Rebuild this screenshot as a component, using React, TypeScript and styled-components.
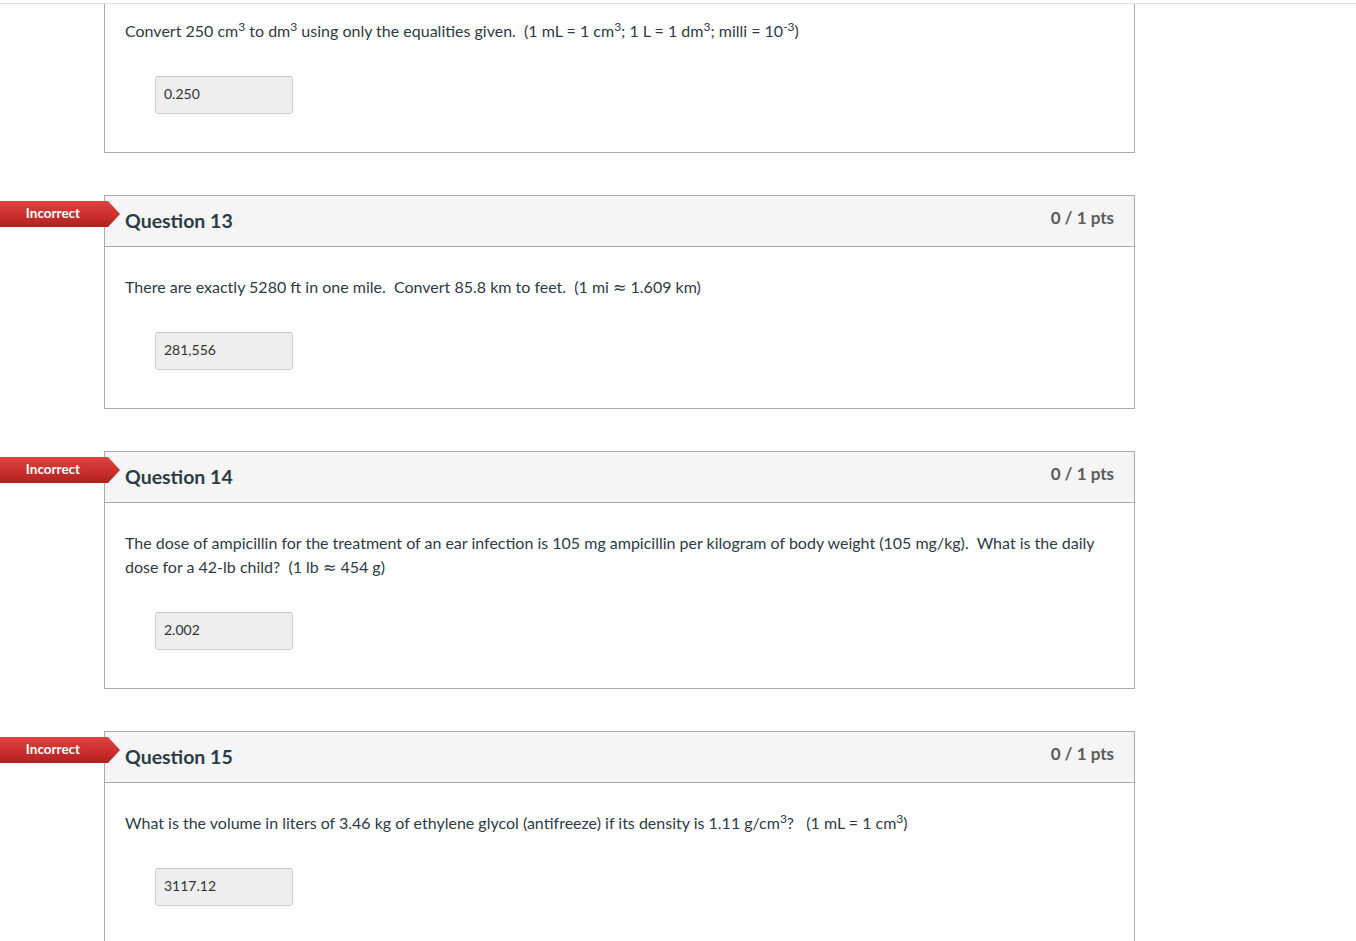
import React from 'react';
import styled, { createGlobalStyle } from 'styled-components';

const GlobalStyle = createGlobalStyle`
  body {
    margin: 0;
    background: #ffffff;
    font-family: Lato, "Open Sans", Arial, sans-serif;
    color: #2d3b45;
  }
`;

const Page = styled.div`
  width: 1356px;
`;

const TopStrip = styled.div`
  height: 3px;
  border-bottom: 1px solid #e3e3e3;
`;

const Card = styled.div<{ $cut?: boolean }>`
  position: relative;
  width: 1029px;
  margin: ${p => (p.$cut ? '0' : '42px')} 0 0 104px;
  border: 1px solid #aaaaaa;
  border-top: ${p => (p.$cut ? 'none' : '1px solid #aaaaaa')};
  background: #ffffff;
`;

const Header = styled.div`
  display: flex;
  justify-content: space-between;
  align-items: flex-start;
  padding: 10px 20px;
  background: #f5f5f5;
  border-bottom: 1px solid #aaaaaa;
`;

const QuestionName = styled.div`
  font-size: 19.5px;
  line-height: 30px;
  font-weight: 700;
  color: #2d3b45;
`;

const Points = styled.div`
  font-size: 17px;
  line-height: 24px;
  font-weight: 700;
  color: #5b5b5b;
`;

const Badge = styled.div`
  position: absolute;
  top: 5px;
  left: -105px;
  width: 120px;
  height: 26px;
  background: linear-gradient(#e2423f, #b3201f);
  clip-path: polygon(0 0, 108px 0, 120px 50%, 108px 100%, 0 100%);
  color: #ffffff;
  font-size: 13.5px;
  font-weight: 700;
  line-height: 25px;
`;

const BadgeLabel = styled.span`
  display: block;
  width: 106px;
  text-align: center;
`;

const Body = styled.div<{ $cut?: boolean }>`
  padding: ${p => (p.$cut ? '15px' : '28px')} 20px 0;
`;

const QuestionText = styled.div`
  font-size: 16px;
  line-height: 24px;
  color: #2d3b45;

  sup {
    font-size: 12px;
    line-height: 0;
    vertical-align: 6px;
  }
`;

const Approx = styled.span`
  font-family: "DejaVu Sans", sans-serif;
  font-size: 16px;
  line-height: 0;
`;

const AnswerRow = styled.div`
  margin: 33px 0 38px 30px;
`;

const AnswerBox = styled.input`
  box-sizing: border-box;
  width: 138px;
  height: 38px;
  padding: 0 8px 3px;
  background: #eeeeee;
  border: 1px solid #cccccc;
  border-radius: 3px;
  font-family: Lato, "Open Sans", Arial, sans-serif;
  font-size: 14px;
  color: #333333;
  outline: none;
`;

interface Question {
  number?: number;
  text: React.ReactNode;
  answer: string;
  cut?: boolean;
}

const questions: Question[] = [
  {
    cut: true,
    text: (
      <>
        Convert 250 cm<sup>3</sup> to dm<sup>3</sup> using only the equalities given.&nbsp; (1 mL = 1 cm
        <sup>3</sup>; 1 L = 1 dm<sup>3</sup>; milli = 10<sup>-3</sup>)
      </>
    ),
    answer: '0.250',
  },
  {
    number: 13,
    text: (
      <>
        There are exactly 5280 ft in one mile.&nbsp; Convert 85.8 km to feet.&nbsp; (1 mi <Approx>≈</Approx> 1.609
        km)
      </>
    ),
    answer: '281,556',
  },
  {
    number: 14,
    text: (
      <>
        The dose of ampicillin for the treatment of an ear infection is 105 mg ampicillin per kilogram of body
        weight (105 mg/kg).&nbsp; What is the daily dose for a 42-lb child?&nbsp; (1 lb <Approx>≈</Approx> 454 g)
      </>
    ),
    answer: '2.002',
  },
  {
    number: 15,
    text: (
      <>
        What is the volume in liters of 3.46 kg of ethylene glycol (antifreeze) if its density is 1.11 g/cm
        <sup>3</sup>?&nbsp;&nbsp; (1 mL = 1 cm<sup>3</sup>)
      </>
    ),
    answer: '3117.12',
  },
];

const App: React.FC = () => {
  return (
    <Page>
      <GlobalStyle />
      <TopStrip />
      {questions.map((q, i) => (
        <Card key={i} $cut={q.cut}>
          {!q.cut && (
            <>
              <Badge>
                <BadgeLabel>Incorrect</BadgeLabel>
              </Badge>
              <Header>
                <QuestionName>Question {q.number}</QuestionName>
                <Points>0 / 1 pts</Points>
              </Header>
            </>
          )}
          <Body $cut={q.cut}>
            <QuestionText>{q.text}</QuestionText>
            <AnswerRow>
              <AnswerBox readOnly value={q.answer} />
            </AnswerRow>
          </Body>
        </Card>
      ))}
    </Page>
  );
};

export default App;
